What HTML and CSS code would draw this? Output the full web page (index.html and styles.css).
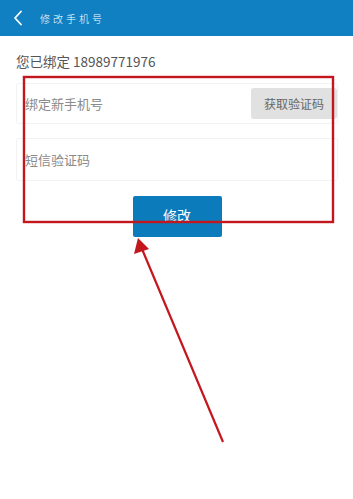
FILE: index.html
```html
<!DOCTYPE html>
<html lang="zh">
<head>
<meta charset="utf-8">
<link rel="stylesheet" href="styles.css">
</head>
<body>
<div class="page">
  <header class="topbar">
    <svg class="back" width="10" height="16" viewBox="0 0 10 16"><path d="M8 1.5 L2 8 L8 14.5" fill="none" stroke="#fff" stroke-width="1.8" stroke-linecap="round" stroke-linejoin="round"/></svg>
    <span class="title">修改手机号</span>
  </header>
  <div class="bound">您已绑定 18989771976</div>
  <div class="card row1">
    <span class="placeholder">绑定新手机号</span>
    <span class="getcode">获取验证码</span>
  </div>
  <div class="card row2">
    <span class="placeholder">短信验证码</span>
  </div>
  <div class="actions">
    <button class="submit">修改</button>
  </div>
  <svg class="overlay" width="353" height="499" viewBox="0 0 353 499">
    <rect x="24" y="77" width="309" height="145" fill="none" stroke="#c3171e" stroke-width="2.4"/>
    <line x1="223" y1="442" x2="142" y2="249" stroke="#c3171e" stroke-width="2.2"/>
    <polygon points="138,238 134,254 149,249" fill="#c3171e"/>
  </svg>
</div>
</body>
</html>
```

FILE: styles.css
```css
* { box-sizing: border-box; }
html, body { margin: 0; padding: 0; background: #fff; }
body { font-family: "Noto Sans CJK SC", "Noto Sans", sans-serif; }
.page { position: relative; width: 353px; height: 499px; overflow: hidden; }
.topbar {
  height: 36px;
  background: #1180c3;
  display: flex;
  align-items: center;
  padding-left: 13px;
}
.back { display: block; }
.title {
  margin-left: 17px;
  color: #fff;
  font-size: 10px;
  letter-spacing: 3px;
  font-weight: 300;
}
.bound {
  padding: 15px 0 0 16px;
  font-size: 13.5px;
  line-height: 20px;
  color: #555;
}
.card {
  margin: 0 15px 0 16px;
  border: 1px solid #f2f2f2;
  border-radius: 3px;
  display: flex;
  align-items: center;
  justify-content: space-between;
  padding-left: 8px;
}
.row1 { margin-top: 12px; height: 41px; padding-right: 0; }
.row2 { margin-top: 14px; height: 43px; }
.placeholder { font-size: 13px; color: #8a8a8a; }
.getcode {
  width: 86px;
  height: 31px;
  background: #e1e1e1;
  border-radius: 3px;
  color: #666;
  font-size: 12px;
  display: flex;
  align-items: center;
  justify-content: center;
}
.actions { display: flex; justify-content: center; margin-top: 15px; padding-left: 1px; }
.submit {
  width: 89px;
  height: 41px;
  border: none;
  border-radius: 2px;
  background: #0b7bbb;
  color: #fff;
  font-family: "Noto Sans CJK SC", "Noto Sans", sans-serif;
  font-size: 14px;
  padding: 0 0 3px 0;
}
.overlay { position: absolute; left: 0; top: 0; pointer-events: none; }
```
